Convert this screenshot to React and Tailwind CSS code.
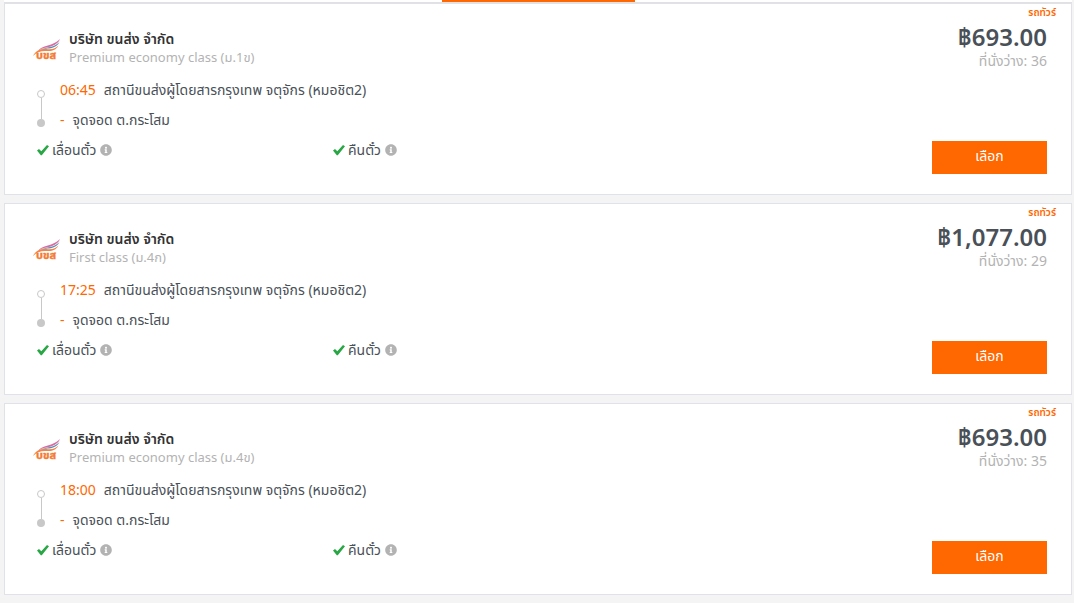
import { FaInfoCircle } from "react-icons/fa";

const trips = [
  {
    id: 1,
    busClass: "Premium economy class (ม.1ข)",
    departs: "06:45",
    price: "฿693.00",
    seats: 36,
  },
  {
    id: 2,
    busClass: "First class (ม.4ก)",
    departs: "17:25",
    price: "฿1,077.00",
    seats: 29,
  },
  {
    id: 3,
    busClass: "Premium economy class (ม.4ข)",
    departs: "18:00",
    price: "฿693.00",
    seats: 35,
  },
];

const OperatorLogo = () => (
  <svg width="28" height="24" viewBox="0 0 28 24" className="mt-1 shrink-0">
    <path d="M5 13C9 8 14 8 18 6.500C22 5 25 3 27 1C26 4 23 6.500 19 8C14 10 10 9 5 13Z" fill="#dc6a9e" />
    <path d="M5 13C10 9.500 14 10 19 8.500C22 7.500 24 6 26.500 4C25 7 22 9.500 18 10.200C13 11 9 10 5 13Z" fill="#5b8fb8" />
    <path d="M0 18C3 11.500 9 10.500 15 11.200C20 11.500 23 10 25.500 7.500C23 12 19 13.500 14 13C8 12.500 4 14 0 18Z" fill="#f58345" />
    <text
      x="13"
      y="21"
      textAnchor="middle"
      fontSize="11"
      fontWeight="700"
      fill="#f47b32"
      stroke="#f47b32"
      strokeWidth="0.4"
    >
      บขส
    </text>
  </svg>
);

const CheckIcon = () => (
  <svg
    width="12"
    height="12"
    viewBox="0 0 12 12"
    fill="#28a745"
    className="mr-[3px] shrink-0"
  >
    <path d="M0 6.500L2 5.100L4.300 7.300L10 1L12 2.300L4.800 11.200H3.800Z" />
  </svg>
);

const RouteLine = () => (
  <div className="mt-[15px] flex w-2 flex-col items-center">
    <span className="h-2 w-2 shrink-0 rounded-full border border-[#c8c8c8]"></span>
    <span className="h-[21px] w-px shrink-0 bg-[#c8c8c8]"></span>
    <span className="h-2 w-2 shrink-0 rounded-full bg-[#c8c8c8]"></span>
  </div>
);

const Policy = ({ label }) => (
  <div className="flex w-[296px] items-center">
    <CheckIcon />
    <span className="mr-1">{label}</span>
    <FaInfoCircle className="h-3 w-3 text-[#b3b3b3]" />
  </div>
);

const TripCard = ({ trip }) => (
  <article className="flex h-48 justify-between border border-[#e1e1e8] bg-white pl-7">
    <div className="pt-[26px]">
      <div className="flex items-center">
        <OperatorLogo />
        <div className="ml-2">
          <h2 className="h-[18px] leading-[18px] font-semibold text-[#333333]">
            บริษัท ขนส่ง จำกัด
          </h2>
          <p className="h-[18px] text-[13px] leading-[18px] text-[#b3b3b3]">
            {trip.busClass}
          </p>
        </div>
      </div>
      <div className="mt-[9px] flex pl-1">
        <RouteLine />
        <div className="ml-[15px] leading-[30px]">
          <p className="flex h-[30px]">
            <span className="mr-2 text-[#ff6700]">{trip.departs}</span>
            <span>สถานีขนส่งผู้โดยสารกรุงเทพ จตุจักร (หมอชิต2)</span>
          </p>
          <p className="flex h-[30px]">
            <span className="mr-2 text-[#ff6700]">-</span>
            <span>จุดจอด ต.กระโสม</span>
          </p>
        </div>
      </div>
      <div className="flex h-[30px] pl-1 leading-[30px]">
        <Policy label="เลื่อนตั๋ว" />
        <Policy label="คืนตั๋ว" />
      </div>
    </div>
    <div className="flex flex-col items-end pr-6 pb-5">
      <span className="-mr-[9px] h-[17px] text-[10px] leading-4 font-semibold text-[#ff6700]">
        รถทัวร์
      </span>
      <p className="h-8 text-2xl leading-8 font-semibold text-[#495057]">
        {trip.price}
      </p>
      <p className="h-4 leading-4 text-[#b3b3b3]">
        ที่นั่งว่าง: {trip.seats}
      </p>
      <button
        type="button"
        className="mt-auto h-[33px] w-[115px] cursor-pointer bg-[#ff6700] pb-[3px] text-white"
      >
        เลือก
      </button>
    </div>
  </article>
);

const App = () => {
  return (
    <main className="min-h-screen bg-[#f4f4f4] pr-[2px] pl-1 font-['Noto_Sans','Noto_Sans_Thai',sans-serif] text-sm text-[#495057]">
      <div className="flex h-[3px] justify-center border-b border-[#e1e1e1] bg-white">
        <div className="h-[2px] w-[193px] bg-[#ff6700]"></div>
      </div>
      <div className="flex flex-col gap-2">
        {trips.map((trip) => (
          <TripCard key={trip.id} trip={trip} />
        ))}
      </div>
    </main>
  );
};

export default App;
